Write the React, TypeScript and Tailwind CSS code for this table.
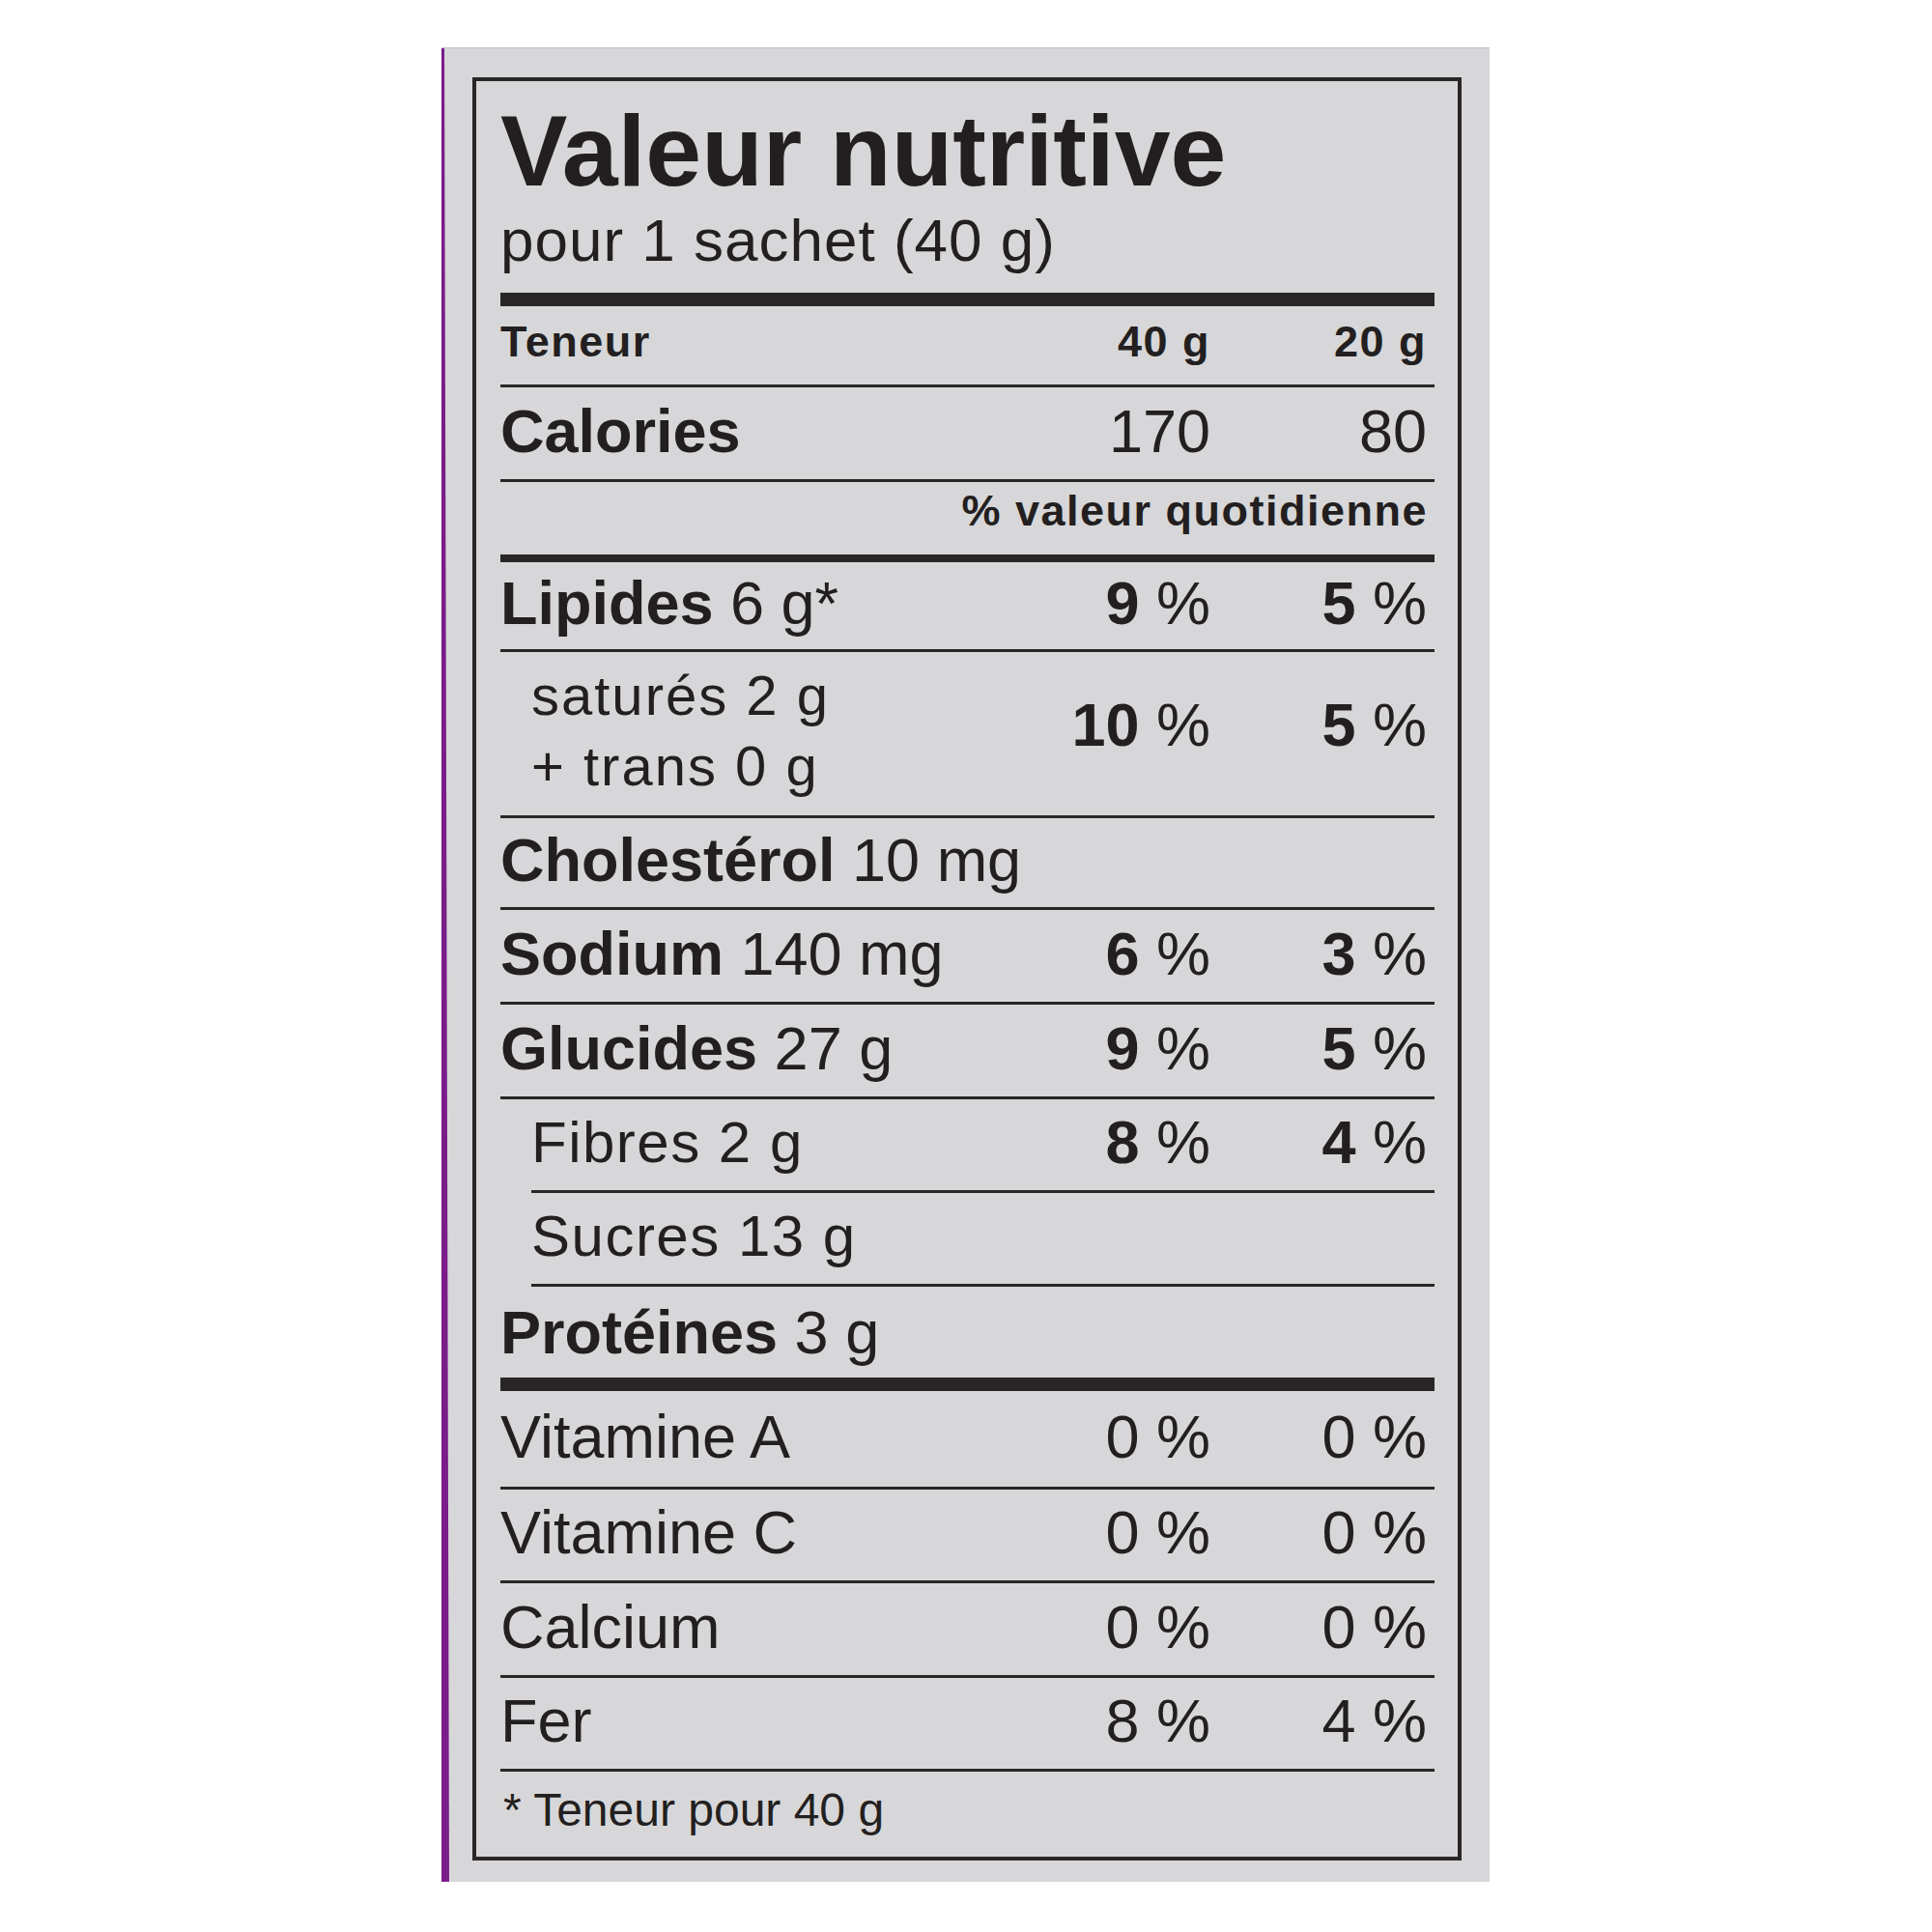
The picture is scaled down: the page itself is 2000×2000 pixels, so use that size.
import React from "react";

const FONT = "font-['Liberation_Sans',Arial,Helvetica,sans-serif]";

function Pct({ n, bold }: { n: string; bold?: boolean }) {
  return (
    <span className="whitespace-pre">
      {bold ? <span className="font-bold">{n}</span> : n}
      {" %"}
    </span>
  );
}

function Vals({ a, b }: { a: React.ReactNode; b: React.ReactNode }) {
  return (
    <div className="flex shrink-0 text-[63px] leading-none">
      <div className="w-[200px] text-right">{a}</div>
      <div className="w-[224px] text-right">{b}</div>
      <div className="w-[8px]" />
    </div>
  );
}

function Row({
  h,
  children,
  extra = "",
}: {
  h: string;
  children: React.ReactNode;
  extra?: string;
}) {
  return (
    <div className={`flex items-center border-[#2a2526] ${h} ${extra}`}>
      {children}
    </div>
  );
}

export default function App() {
  return (
    <div className={`w-[2000px] h-[2000px] bg-white pl-[457px] pt-[49px] ${FONT}`}>
      <div className="flex w-[1085px] h-[1899px] bg-[#d7d7d9] border-t border-[#c4c3c7]">
        {/* purple side edge */}
        <div className="w-[8px] h-full bg-[#7a1d89] [clip-path:polygon(0_0,3px_0,100%_100%,0_100%)]" />
        <div className="ml-[24px] mt-[30px] w-[1024px] h-[1846px] border-[4px] border-[#2a2526] pl-[25px] pr-[24px] flex flex-col text-[#231f20]">
          {/* Title */}
          <div className="pt-[20px]">
            <div className="text-[104px] leading-none font-bold">Valeur nutritive</div>
            <div className="mt-[10px] text-[62px] leading-none tracking-[1px]">
              pour 1 sachet (40 g)
            </div>
          </div>
          <div className="mt-[23px] h-[14px] bg-[#2a2526]" />

          {/* Teneur header */}
          <div className="flex items-start h-[84px] border-b-[3px] border-[#2a2526] pt-[14px] text-[45px] leading-none font-bold tracking-[1.5px]">
            <div className="flex-1">Teneur</div>
            <div className="w-[200px] text-right">40 g</div>
            <div className="w-[224px] text-right">20 g</div>
            <div className="w-[8px]" />
          </div>

          {/* Calories */}
          <Row h="h-[98px]" extra="border-b-[3px] pb-[5px]">
            <div className="flex-1 text-[63px] leading-none font-bold">Calories</div>
            <Vals a="170" b="80" />
          </Row>

          {/* % valeur quotidienne */}
          <div className="flex items-start justify-end h-[83px] border-b-[8px] border-[#2a2526] pt-[7px] pr-[7px]">
            <div className="text-[45px] leading-none font-bold tracking-[1.5px]">
              % valeur quotidienne
            </div>
          </div>

          {/* Lipides */}
          <Row h="h-[93px]" extra="border-b-[3px] pb-[5px]">
            <div className="flex-1 text-[63px] leading-none whitespace-pre">
              <span className="font-bold">Lipides</span> 6 g*
            </div>
            <Vals a={<Pct n="9" bold />} b={<Pct n="5" bold />} />
          </Row>

          {/* saturés + trans */}
          <div className="flex items-start h-[172px] border-b-[3px] border-[#2a2526]">
            <div className="flex-1 pl-[32px] pt-[8px] text-[58px] leading-[73px] tracking-[2px]">
              <div>saturés 2 g</div>
              <div>+ trans 0 g</div>
            </div>
            <div className="pt-[44px]">
              <Vals a={<Pct n="10" bold />} b={<Pct n="5" bold />} />
            </div>
          </div>

          {/* Cholestérol */}
          <Row h="h-[95px]" extra="border-b-[3px] pb-[5px]">
            <div className="flex-1 text-[63px] leading-none whitespace-pre">
              <span className="font-bold">Cholestérol</span> 10 mg
            </div>
          </Row>

          {/* Sodium */}
          <Row h="h-[98px]" extra="border-b-[3px] pb-[5px]">
            <div className="flex-1 text-[63px] leading-none whitespace-pre">
              <span className="font-bold">Sodium</span> 140 mg
            </div>
            <Vals a={<Pct n="6" bold />} b={<Pct n="3" bold />} />
          </Row>

          {/* Glucides */}
          <Row h="h-[98px]" extra="border-b-[3px] pb-[5px]">
            <div className="flex-1 text-[63px] leading-none whitespace-pre">
              <span className="font-bold">Glucides</span> 27 g
            </div>
            <Vals a={<Pct n="9" bold />} b={<Pct n="5" bold />} />
          </Row>

          {/* Fibres */}
          <Row h="h-[97px]" extra="ml-[32px] border-b-[3px] pb-[5px]">
            <div className="flex-1 text-[60px] leading-none tracking-[1.5px]">Fibres 2 g</div>
            <Vals a={<Pct n="8" bold />} b={<Pct n="4" bold />} />
          </Row>

          {/* Sucres */}
          <Row h="h-[97px]" extra="ml-[32px] border-b-[3px] pb-[5px]">
            <div className="flex-1 text-[60px] leading-none tracking-[1.5px]">Sucres 13 g</div>
          </Row>

          {/* Protéines */}
          <Row h="h-[108px]" extra="border-b-[14px]">
            <div className="flex-1 text-[63px] leading-none whitespace-pre">
              <span className="font-bold">Protéines</span> 3 g
            </div>
          </Row>

          {/* Vitamins & minerals */}
          <Row h="h-[102px]" extra="border-b-[3px] pb-[5px]">
            <div className="flex-1 text-[63px] leading-none">Vitamine A</div>
            <Vals a={<Pct n="0" />} b={<Pct n="0" />} />
          </Row>
          <Row h="h-[97px]" extra="border-b-[3px] pb-[5px]">
            <div className="flex-1 text-[63px] leading-none">Vitamine C</div>
            <Vals a={<Pct n="0" />} b={<Pct n="0" />} />
          </Row>
          <Row h="h-[98px]" extra="border-b-[3px] pb-[5px]">
            <div className="flex-1 text-[63px] leading-none">Calcium</div>
            <Vals a={<Pct n="0" />} b={<Pct n="0" />} />
          </Row>
          <Row h="h-[97px]" extra="border-b-[3px] pb-[5px]">
            <div className="flex-1 text-[63px] leading-none">Fer</div>
            <Vals a={<Pct n="8" />} b={<Pct n="4" />} />
          </Row>

          {/* Footnote */}
          <div className="flex-1 pt-[16px] pl-[3px] text-[48px] leading-none">
            * Teneur pour 40 g
          </div>
        </div>
      </div>
    </div>
  );
}
